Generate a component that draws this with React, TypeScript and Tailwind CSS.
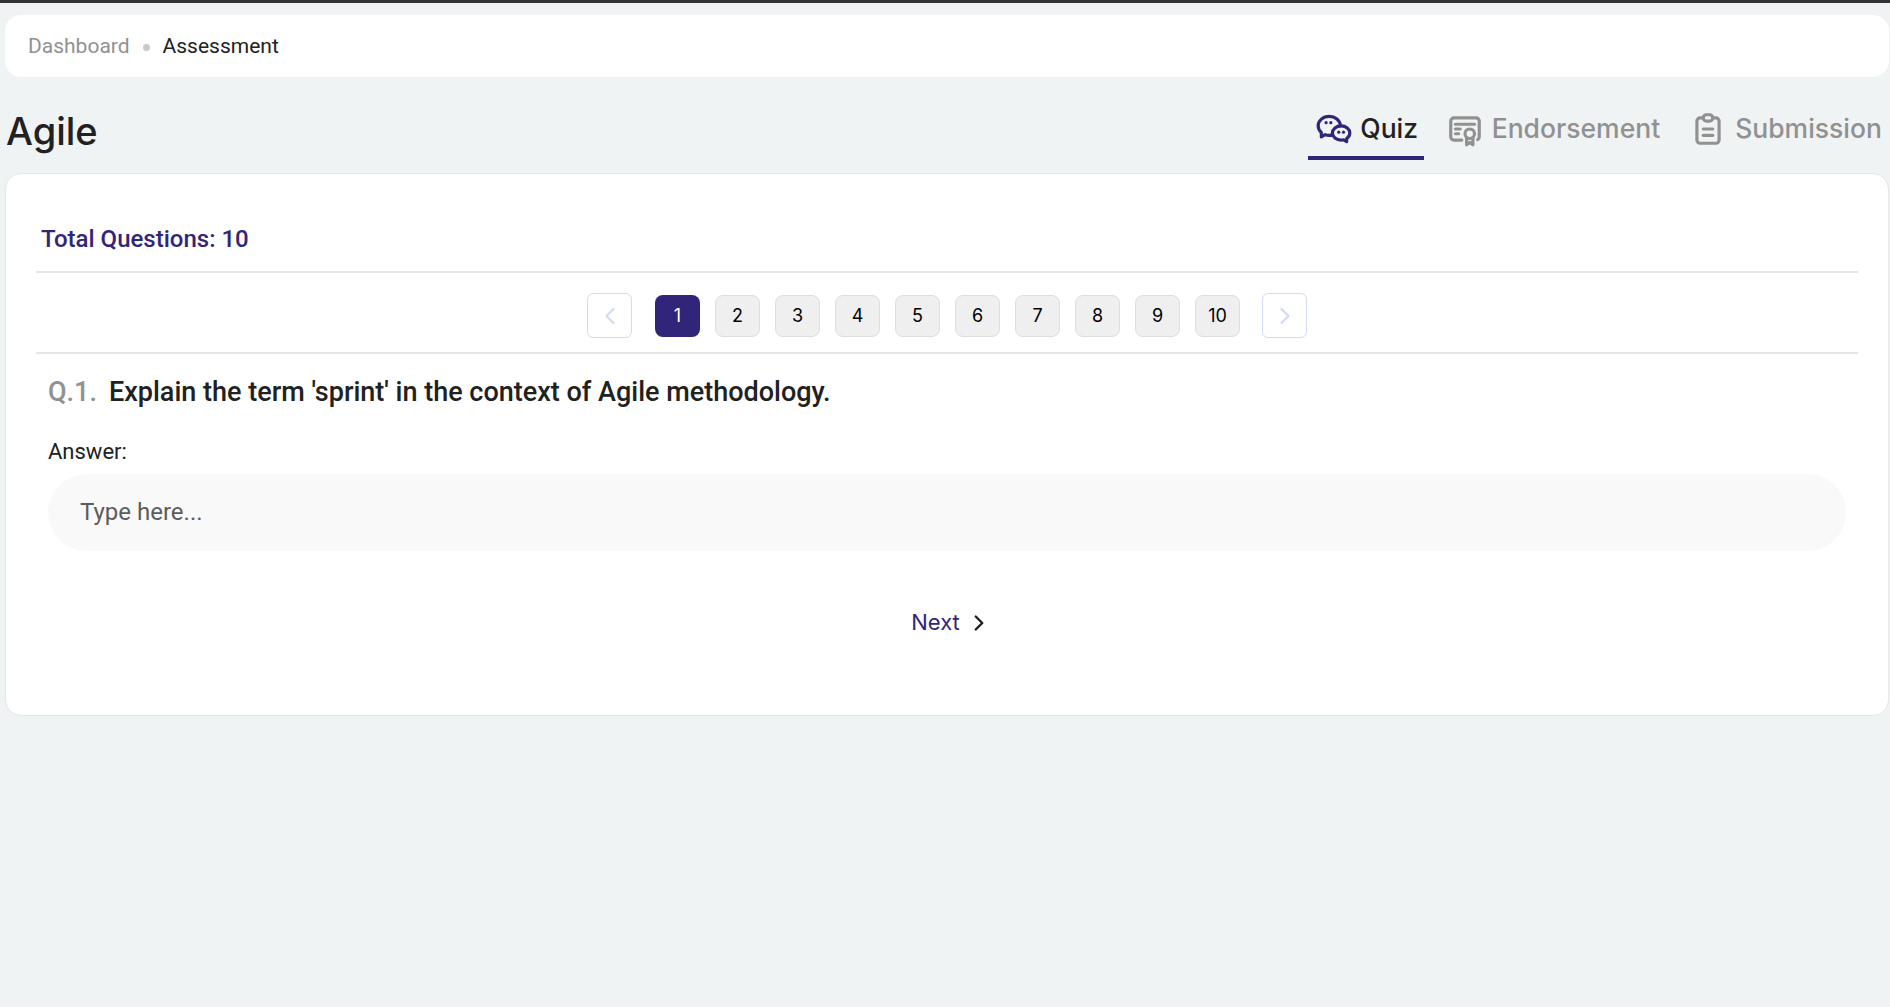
import { ChevronLeft, ChevronRight } from "lucide-react";
import { TbBrandWechat, TbCertificate, TbClipboardText } from "react-icons/tb";

const pages = [1, 2, 3, 4, 5, 6, 7, 8, 9, 10];

export default function App() {
  return (
    <div className="min-h-[1007px] bg-[#f0f3f4] font-['Roboto',sans-serif]">
      <div className="h-[3px] bg-[#333333]" />

      <div className="pl-[5px] pr-px pt-3">
        <div className="flex h-[62px] items-center rounded-[16px] bg-white pl-[23px] pt-[2px] text-[21px]">
          <span className="text-[#919191]">Dashboard</span>
          <span className="ml-[13px] mr-[13px] h-[7px] w-[7px] rounded-full bg-[#c9c9c9]" />
          <span className="text-[#212121]">Assessment</span>
        </div>
      </div>

      <div className="flex h-[96px] items-start justify-between pl-[6px] pr-[8px]">
        <h1 className="mt-[30px] font-['Inter',sans-serif] text-[38px] leading-[48px] font-medium text-[#212121]">
          Agile
        </h1>
        <div className="mt-[19px] flex text-[26.5px] font-medium">
          <div className="flex h-[64px] w-[116px] items-center justify-center gap-[7px] border-b-4 border-[#312579] pl-[2px] pt-[6px] text-[#212121]">
            <TbBrandWechat className="text-[38px] text-[#312579]" />
            <span className="font-['Inter',sans-serif]">Quiz</span>
          </div>
          <div className="ml-[22px] flex h-[64px] items-center gap-[8px] pt-[2px] text-[#919191]">
            <TbCertificate className="text-[38px]" />
            <span className="font-['Inter',sans-serif]">Endorsement</span>
          </div>
          <div className="ml-[29px] flex h-[64px] items-center gap-[8px] pt-[2px] text-[#919191]">
            <TbClipboardText className="text-[38px]" />
            <span className="font-['Inter',sans-serif]">Submission</span>
          </div>
        </div>
      </div>

      <div className="pl-[5px] pr-px">
        <div className="h-[543px] rounded-[16px] border border-[#e4e7e8] bg-white px-[30px]">
          <div className="flex h-[99px] items-end border-b-2 border-[#e6e6e6] pb-[14px] pl-[5px] text-[24px] font-medium text-[#312579]">
            Total Questions: 10
          </div>

          <div className="flex h-[81px] items-start justify-center border-b-2 border-[#e6e6e6] pt-[20px]">
            <div className="flex items-center">
              <button className="mr-[23px] flex h-[45px] w-[45px] items-center justify-center rounded-[6px] border border-[#d5dcf2] text-[#d5dcf2]">
                <ChevronLeft size={28} />
              </button>
              <div className="flex gap-[15px]">
                {pages.map((n) => (
                  <button
                    key={n}
                    className={
                      n === 1
                        ? "h-[42px] w-[45px] rounded-[8px] bg-[#312579] font-['Inter',sans-serif] text-[18px] text-white"
                        : "h-[42px] w-[45px] rounded-[8px] border border-[#dedede] bg-[#efefef] font-['Inter',sans-serif] text-[18px] text-black"
                    }
                  >
                    {n}
                  </button>
                ))}
              </div>
              <button className="ml-[22px] flex h-[45px] w-[45px] items-center justify-center rounded-[6px] border border-[#d5dcf2] text-[#d5dcf2]">
                <ChevronRight size={28} />
              </button>
            </div>
          </div>

          <div className="pl-3 pr-3">
            <div className="mt-[20px] flex items-center text-[27px] leading-[36px] font-medium">
              <span className="mr-[12px] text-[#919191]">Q.1.</span>
              <span className="text-[#212121]">Explain the term 'sprint' in the context of Agile methodology.</span>
            </div>
            <div className="mt-[28px] text-[22px] leading-[28px] text-[#212121]">Answer:</div>
            <input
              placeholder="Type here..."
              className="mt-2 h-[77px] w-full rounded-[40px] bg-[#f9f9f9] pb-[2px] pl-8 text-[24px] text-[#212121] outline-none placeholder:text-[#5c5c5c]"
            />
            <div className="mt-[55px] flex items-center justify-center">
              <button className="ml-[9px] flex items-center gap-[6px] font-['Inter',sans-serif] text-[22px] text-[#312579]">
                Next
                <ChevronRight size={26} strokeWidth={2.25} className="text-[#212121]" />
              </button>
            </div>
          </div>
        </div>
      </div>
    </div>
  );
}
